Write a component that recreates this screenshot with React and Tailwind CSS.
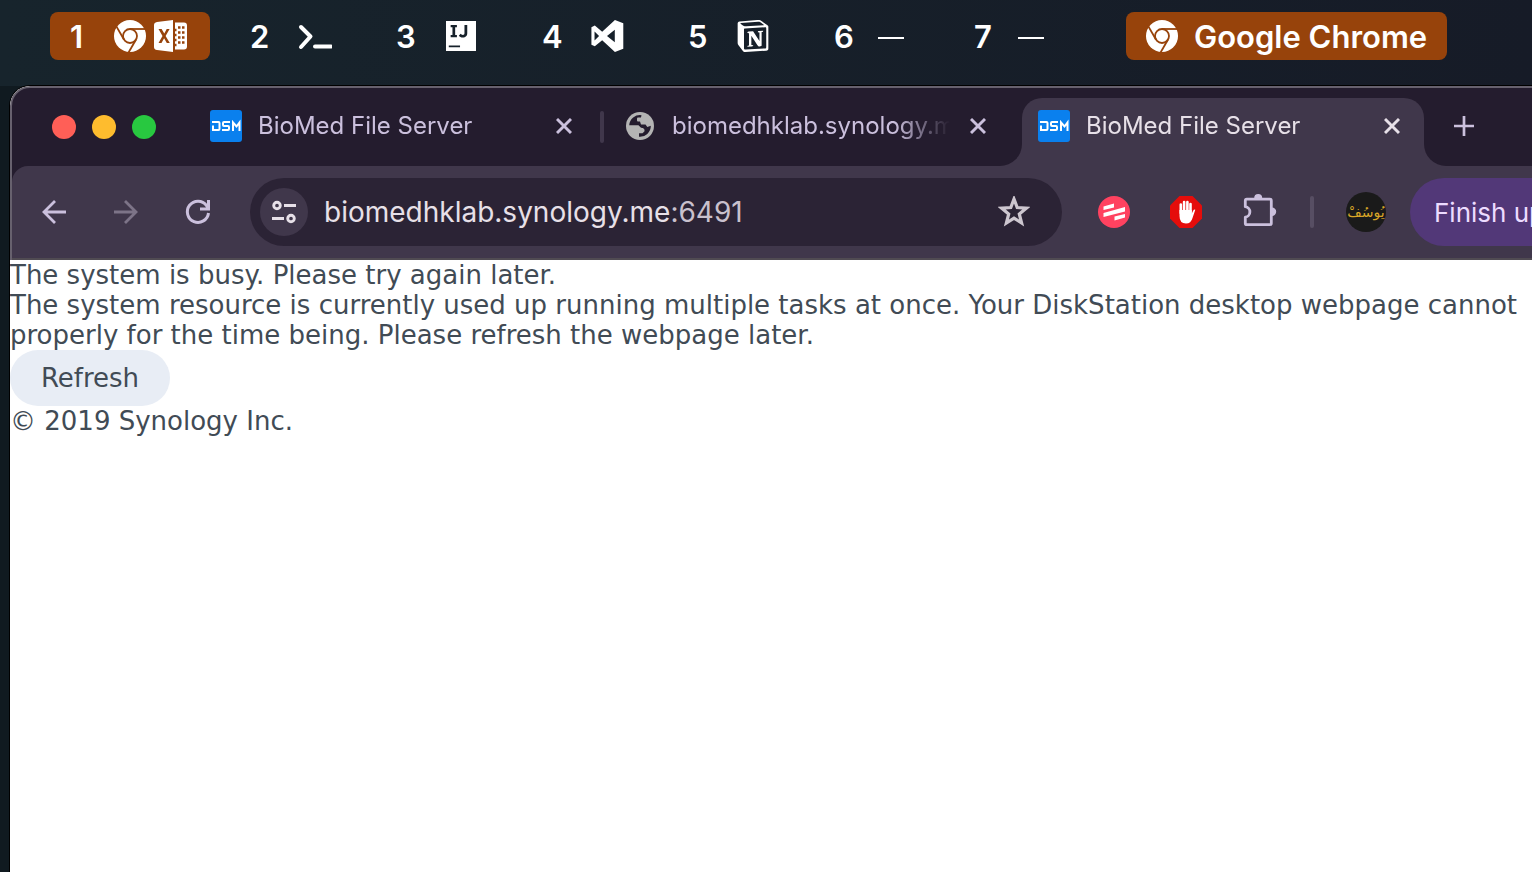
import { SiIntellijidea, SiNotion } from "react-icons/si";

function ChromeIcon() {
  return (
    <svg viewBox="0 0 32 32" className="size-8 shrink-0" fill="none" aria-hidden="true">
      <circle cx="16" cy="16" r="16" fill="currentColor" />
      <g stroke="#97430b" strokeWidth="1.800">
        <circle cx="16" cy="16" r="7" />
        <path d="M16 9h16" />
        <path d="M16 9h16" transform="rotate(120 16 16)" />
        <path d="M16 9h16" transform="rotate(240 16 16)" />
      </g>
    </svg>
  );
}

function ExcelIcon() {
  return (
    <svg viewBox="0 0 34 34" className="size-[34px]" fill="currentColor" aria-hidden="true">
      <path fillRule="evenodd" d="M19 1v32L3 31Q0 30.500 0 28V6q0-2.500 3-3ZM4.500 10l4 7-4 7h3l2.600-4.700 2.700 4.700h3l-4.200-7 4-7h-2.900l-2.400 4.600L7.600 10Z" />
      <path fillRule="evenodd" d="M21 3.500h9q3 0 3 3v21q0 3-3 3h-9v-3.300h1.500v-2.500H21v-2.400h1.500v-2.500H21v-2.500h1.500v-2.500H21v-2.500h1.500V9.800H21ZM24 7.300v2.500h2.500V7.300Zm4 0v2.500h2.500V7.300Zm-4 5v2.500h2.500v-2.500Zm4 0v2.500h2.500v-2.500Zm-4 5v2.500h2.500v-2.500Zm4 0v2.500h2.500v-2.500Zm-4 5v2.500h2.500v-2.500Zm4 0v2.500h2.500v-2.500Z" />
    </svg>
  );
}

function PromptIcon() {
  return (
    <svg viewBox="0 0 34 34" className="size-[34px]" fill="none" stroke="currentColor" aria-hidden="true">
      <path d="M3 8l9.500 9.500L3 28" strokeWidth="4" strokeLinecap="round" strokeLinejoin="round" />
      <path d="M17 27.500h16" strokeWidth="4" strokeLinecap="round" />
    </svg>
  );
}

function VisualStudioIcon() {
  return (
    <svg viewBox="0 0 24 24" className="size-[34px]" fill="currentColor" aria-hidden="true">
      <path fillRule="evenodd" d="M17.600.7 23.500 3v18l-5.900 2.300-9-8.300-5.200 4.300-2.400-1.100V5.800l2.400-1.200L8.600 9ZM17.500 7.600 12 12l5.500 4.400ZM3.200 8.900v6.200L6.400 12Z" />
    </svg>
  );
}

function Workspace({ label, className, children }) {
  return (
    <button type="button" className={`flex h-12 shrink-0 items-center rounded-lg pl-5 text-left ${className}`}>
      <span className="w-5 pt-0.5">{label}</span>
      {children}
    </button>
  );
}

function AppSlot({ children }) {
  return <span className="flex size-[34px] shrink-0 items-center justify-center">{children}</span>;
}

function MenuBar() {
  return (
    <header className="flex h-[86px] shrink-0 items-start bg-linear-to-r from-[#17242c] to-[#161b27] pt-3 pl-[50px] text-[31px] leading-10 font-semibold text-white">
      <nav className="flex" aria-label="Workspaces">
        <Workspace label="1" className="mr-5 w-40 bg-[#97430b]">
          <span className="ml-6 flex items-center gap-2">
            <ChromeIcon />
            <ExcelIcon />
          </span>
        </Workspace>
        <Workspace label="2" className="w-[146px] gap-7"><AppSlot><PromptIcon /></AppSlot></Workspace>
        <Workspace label="3" className="w-[146px] gap-7"><AppSlot><SiIntellijidea className="size-[30px]" /></AppSlot></Workspace>
        <Workspace label="4" className="w-[146px] gap-7"><AppSlot><VisualStudioIcon /></AppSlot></Workspace>
        <Workspace label="5" className="w-[146px] gap-7"><AppSlot><SiNotion className="size-8" /></AppSlot></Workspace>
        <Workspace label="6" className="w-[140px] gap-6">
          <span className="mt-1 h-0.5 w-[26px] bg-white" />
        </Workspace>
        <Workspace label="7" className="w-[172px] gap-6">
          <span className="mt-1 h-0.5 w-[26px] bg-white" />
        </Workspace>
      </nav>
      <div className="flex h-12 shrink-0 items-center gap-4 rounded-lg bg-[#97430b] px-5 whitespace-nowrap">
        <ChromeIcon />
        <span className="pt-0.5">Google Chrome</span>
      </div>
    </header>
  );
}

function DsmIcon() {
  return (
    <svg viewBox="0 0 32 32" className="size-8 shrink-0" aria-hidden="true">
      <rect width="32" height="32" rx="3" fill="#0a80ee" />
      <g fill="none" stroke="#fff" strokeWidth="2">
        <path d="M2 12h6.500q1 0 1 1v6q0 1-1 1H3v-4.500" />
        <path d="M20 12h-6q-1 0-1 1v2q0 1 1 1h4q1 0 1 1v2q0 1-1 1h-6" />
        <path d="M23 21v-8.500l3.500 4 3-4V21" />
      </g>
    </svg>
  );
}

function GlobeIcon() {
  return (
    <svg viewBox="0 0 32 32" className="size-8 shrink-0" aria-hidden="true">
      <circle cx="16" cy="16" r="14" fill="#b4b4b4" />
      <path d="M5.200 15.200A10.900 10.900 0 0 1 17.500 5.200L17 7.500h-3q-1 0-1 1.200v1.800q0 1 1 1h2l1 3h4.500l1.800 2.500 3.500-1.200A10.900 10.900 0 0 1 15 26.800v-3.500h3.500l2-2q.5-3.500-3.500-3.500l-2.500-2.600Z" fill="#241c2e" />
    </svg>
  );
}

function CloseButton() {
  return (
    <button type="button" aria-label="Close tab" className="flex size-6 shrink-0 items-center justify-center">
      <svg viewBox="0 0 16 16" className="size-4" stroke="currentColor" strokeWidth="2.900" aria-hidden="true">
        <path d="M1 1l14 14M15 1 1 15" />
      </svg>
    </button>
  );
}

function Tab({ title, icon, className }) {
  return (
    <div className={`flex h-14 shrink-0 items-center gap-4 pl-4 ${className}`}>
      {icon}
      <span className="min-w-0 flex-1 overflow-hidden mask-r-from-80% mask-r-to-100% whitespace-nowrap">{title}</span>
      <CloseButton />
    </div>
  );
}

function TabStrip() {
  return (
    <div className="flex h-[78px] items-start pt-[10px] text-2xl text-[#cbc0dd]">
      <div className="mt-[17px] ml-10 flex shrink-0 gap-4">
        <button type="button" aria-label="Close window" className="size-6 rounded-full bg-[#ff5f57]" />
        <button type="button" aria-label="Minimise window" className="size-6 rounded-full bg-[#febc2e]" />
        <button type="button" aria-label="Zoom window" className="size-6 rounded-full bg-[#28c840]" />
      </div>
      <Tab title="BioMed File Server" icon={<DsmIcon />} className="ml-[38px] w-[402px] pr-5" />
      <span className="mx-1 mt-[13px] h-8 w-1 shrink-0 rounded-full bg-[#40374b]" />
      <Tab title="biomedhklab.synology.me" icon={<GlobeIcon />} className="w-[392px] pr-[10px]" />
      <div className="size-[22px] shrink-0 self-end bg-[#40374b]">
        <div className="size-full rounded-br-[22px] bg-[#241c2e]" />
      </div>
      <div className="h-[68px] shrink-0 rounded-t-[20px] bg-[#40374b] text-[#e7e0e8]">
        <Tab title="BioMed File Server" icon={<DsmIcon />} className="w-[402px] pr-5" />
      </div>
      <div className="size-[22px] shrink-0 self-end bg-[#40374b]">
        <div className="size-full rounded-bl-[22px] bg-[#241c2e]" />
      </div>
      <button type="button" aria-label="New tab" className="mt-4 ml-1.5 flex size-6 shrink-0 items-center justify-center">
        <svg viewBox="0 0 20 20" className="size-5 shrink-0" stroke="currentColor" strokeWidth="2.700" aria-hidden="true">
          <path d="M10 0v20M0 10h20" />
        </svg>
      </button>
    </div>
  );
}

function IconButton({ label, className = "", children }) {
  return (
    <button type="button" aria-label={label} className={`flex size-8 shrink-0 items-center justify-center ${className}`}>
      <svg viewBox="0 0 32 32" className="size-8 shrink-0" fill="none" aria-hidden="true">{children}</svg>
    </button>
  );
}

function AddressBar() {
  return (
    <div className="ml-9 flex h-[68px] min-w-0 flex-1 items-center rounded-full bg-[#2b2335] pr-8 pl-[10px] text-[#e7e0e8]">
      <button type="button" aria-label="Site information" className="flex size-12 shrink-0 items-center justify-center rounded-full bg-[#40374b]">
        <svg viewBox="0 0 24 24" className="size-6" fill="none" stroke="currentColor" strokeWidth="2.900" aria-hidden="true">
          <circle cx="5" cy="5.500" r="3.300" />
          <path d="M12 5.500h12M0 18.500h12" />
          <circle cx="19" cy="18.500" r="3.300" />
        </svg>
      </button>
      <div className="ml-4 min-w-0 flex-1 truncate text-[28px] leading-9">
        biomedhklab.synology.me<span className="text-[#c9c1cd]">:6491</span>
      </div>
      <IconButton label="Bookmark this tab">
        <path d="M16 3l3.200 8.500 9.200.6-7.100 5.900 2.300 9L16 22.100 8.400 27l2.300-9-7.100-5.900 9.200-.6Z" stroke="#cdc6cf" strokeWidth="3.200" />
      </IconButton>
    </div>
  );
}

function Toolbar() {
  return (
    <div className="flex h-[94px] items-center rounded-tl-2xl border-b-2 border-[#504b52] bg-[#40374b] pl-[26px] text-[#cbc0dd]">
      <div className="flex gap-10">
        <IconButton label="Back">
          <path d="M28 16H6M17 5 6 16l11 11" stroke="currentColor" strokeWidth="2.800" />
        </IconButton>
        <IconButton label="Forward" className="text-[#7d7488]">
          <path d="M4 16h22M15 5l11 11-11 11" stroke="currentColor" strokeWidth="2.800" />
        </IconButton>
        <IconButton label="Reload">
          <path d="M26.500 17A10.600 10.600 0 1 1 24.500 9.500L26 12M26.500 4v9H18" stroke="currentColor" strokeWidth="3" />
        </IconButton>
      </div>
      <AddressBar />
      <div className="ml-9 flex items-center gap-10">
        <IconButton label="Task extension">
          <circle cx="16" cy="16" r="16" fill="#ff4260" />
          <path d="M5.500 10.500 16 7.500v4L5.500 14ZM5.500 17 27 11v4.500L5.500 21ZM16.500 20.500l10.500-2.500v3.500L16.500 24.500Z" fill="#fff" />
        </IconButton>
        <IconButton label="Content blocker">
          <path d="M9.500 0h13L32 9.500v13L22.500 32h-13L0 22.500v-13Z" fill="#e50d0b" />
          <path d="M10.800 17V8.500M14.100 15V6M17.400 15V6M20.500 16V8" stroke="#fff" strokeWidth="2.600" strokeLinecap="round" />
          <path d="M9.500 14h12.300v3.500l1.200-2.500q1.200-2 2.300-1.200L22.500 22q-1.500 5.500-6.500 5.500-6.500 0-6.500-7.500Z" fill="#fff" />
        </IconButton>
        <button type="button" aria-label="Extensions" className="flex w-9 shrink-0 items-center justify-center">
          <svg viewBox="0 0 36 36" className="size-9 shrink-0" fill="none" aria-hidden="true">
            <path d="M4.800 5.200h23q1.500 0 1.500 1.500v22.500q0 1.500-1.500 1.500h-23q-1.500 0-1.500-1.500v-6a5.300 5.300 0 0 0 0-10.500v-6q0-1.500 1.500-1.500Z" stroke="currentColor" strokeWidth="2.800" strokeLinejoin="round" />
            <path d="M12.200 5v-1a4 4 0 0 1 8 0v1ZM29 13.500h1a4.200 4.200 0 0 1 0 8.400h-1Z" fill="currentColor" />
          </svg>
        </button>
      </div>
      <span className="ml-8 h-8 w-1 shrink-0 rounded-full bg-[#574e63]" />
      <button type="button" aria-label="Profile" className="ml-8 flex size-10 shrink-0 items-center justify-center rounded-full bg-[#1a1a1a] font-['DejaVu_Sans',sans-serif] text-sm text-[#d9a627]">
        <span lang="ar" dir="rtl">يُوسُفْ</span>
      </button>
      <button type="button" className="ml-6 h-[68px] w-[122px] shrink-0 overflow-hidden rounded-l-full bg-[#523878] pl-6 text-left text-[26px] whitespace-nowrap text-[#eddcff]">
        Finish up
      </button>
    </div>
  );
}

function BusyPage() {
  return (
    <main className="flex-1 bg-white font-['DejaVu_Sans',sans-serif] text-[26px] leading-[30px] whitespace-nowrap text-[#414b55]">
      <h1>The system is busy. Please try again later.</h1>
      <p>
        The system resource is currently used up running multiple tasks at once. Your DiskStation desktop webpage cannot
        <br />
        properly for the time being. Please refresh the webpage later.
      </p>
      <button type="button" className="block h-14 w-40 rounded-full bg-[#e8edf5] text-center">Refresh</button>
      <footer>© 2019 Synology Inc.</footer>
    </main>
  );
}

export default function App() {
  return (
    <div className="flex min-h-screen flex-col overflow-hidden bg-[#101a20] font-['Inter',sans-serif]">
      <MenuBar />
      <div className="ml-[10px] flex flex-1 flex-col overflow-hidden rounded-tl-[20px] bg-white ring-1 ring-black">
        <div className="rounded-tl-[20px] border-t-2 border-l-2 border-[#67616e] bg-[#241c2e]">
          <TabStrip />
          <Toolbar />
        </div>
        <BusyPage />
      </div>
    </div>
  );
}
